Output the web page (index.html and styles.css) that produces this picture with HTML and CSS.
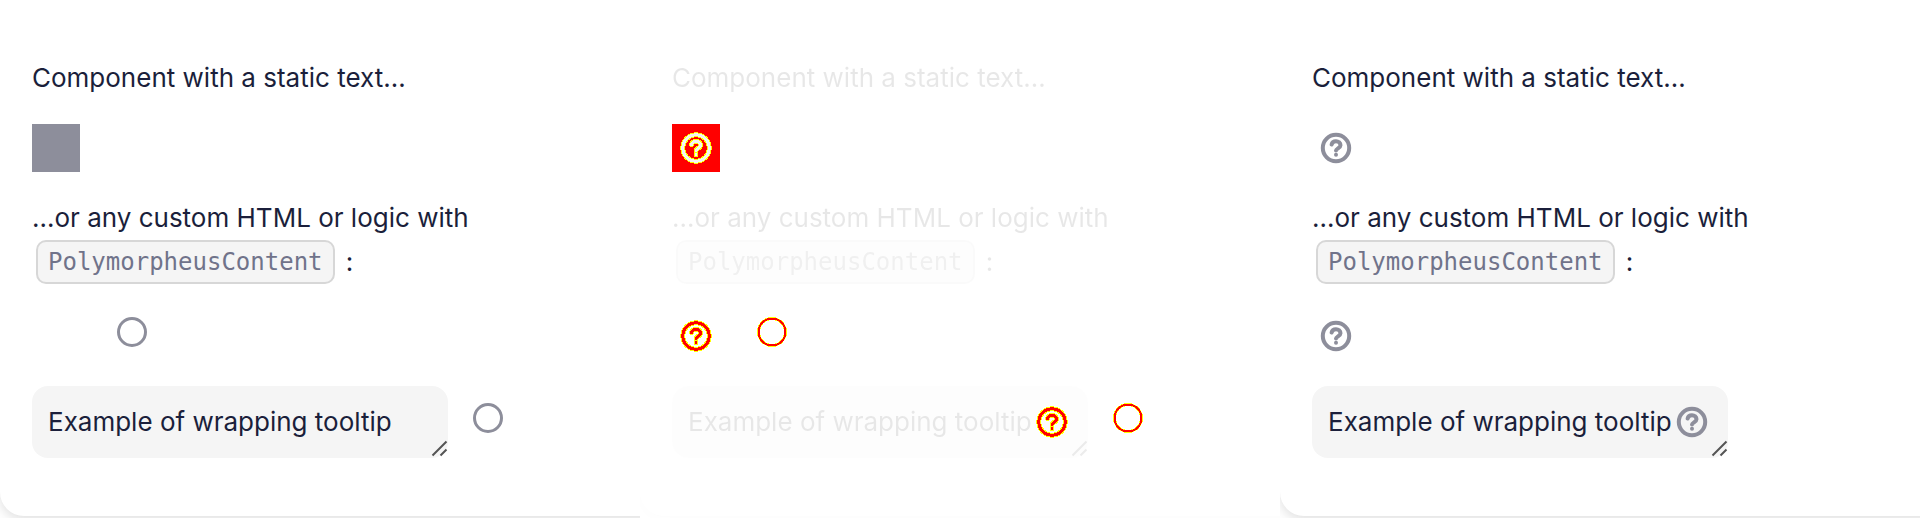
FILE: index.html
```
<!DOCTYPE html>
<html lang="en">
<head>
<meta charset="utf-8">
<title>Tooltip</title>
<link rel="stylesheet" href="styles.css">
</head>
<body>
<svg class="defs" aria-hidden="true">
  <symbol id="help" viewBox="0 0 48 48">
    <circle cx="24" cy="24" r="13.2"/>
    <path d="M19.6 20.6C20 18.5 21.8 17.3 24 17.3C26.5 17.3 28.5 18.9 28.5 21.2C28.5 24 24 24.5 24 26.6"/>
    <path d="M24 30.7v.1"/>
  </symbol>
  <symbol id="ring" viewBox="0 0 30 30"><circle cx="15" cy="15" r="13.5"/></symbol>
  <symbol id="grip" viewBox="0 0 20 20"><path d="M4.5 17.5l14-14M12.5 17.5l6-6"/></symbol>
</svg>
<main class="board">
  <section class="panel">
    <div class="card">
      <p class="text">Component with a static text…</p>
      <div class="row"><span class="block"></span></div>
      <p class="text long">…or any custom HTML or logic with <code class="code">PolymorpheusContent</code> :</p>
      <div class="row"><span class="slot"></span><svg class="ring ring-near"><use href="#ring"/></svg></div>
      <div class="row">
        <div class="field"><textarea class="area" rows="1" aria-label="Example">Example of wrapping tooltip</textarea><svg class="grip"><use href="#grip"/></svg></div>
        <svg class="ring ring-far"><use href="#ring"/></svg>
      </div>
    </div>
  </section>
  <section class="panel diff">
    <div class="card">
      <p class="text faint">Component with a static text…</p>
      <div class="row"><button class="help filled" aria-label="Help"><svg class="icon outline"><use href="#help"/></svg><svg class="icon core"><use href="#help"/></svg></button></div>
      <p class="text long faint">…or any custom HTML or logic with <code class="code">PolymorpheusContent</code> :</p>
      <div class="row"><button class="help" aria-label="Help"><svg class="icon outline"><use href="#help"/></svg><svg class="icon core"><use href="#help"/></svg></button><span class="ring-pair ring-near"><svg class="ring outline"><use href="#ring"/></svg><svg class="ring core"><use href="#ring"/></svg></span></div>
      <div class="row">
        <div class="field"><textarea class="area faint" rows="1" aria-label="Example">Example of wrapping tooltip</textarea><svg class="grip faint"><use href="#grip"/></svg><button class="help inside" aria-label="Help"><svg class="icon outline"><use href="#help"/></svg><svg class="icon core"><use href="#help"/></svg></button></div>
        <span class="ring-pair ring-far"><svg class="ring outline"><use href="#ring"/></svg><svg class="ring core"><use href="#ring"/></svg></span>
      </div>
    </div>
  </section>
  <section class="panel">
    <div class="card">
      <p class="text">Component with a static text…</p>
      <div class="row"><button class="help" aria-label="Help"><svg class="icon"><use href="#help"/></svg></button></div>
      <p class="text long">…or any custom HTML or logic with <code class="code">PolymorpheusContent</code> :</p>
      <div class="row"><button class="help" aria-label="Help"><svg class="icon"><use href="#help"/></svg></button></div>
      <div class="row">
        <div class="field"><textarea class="area" rows="1" aria-label="Example">Example of wrapping tooltip</textarea><svg class="grip"><use href="#grip"/></svg><button class="help inside" aria-label="Help"><svg class="icon"><use href="#help"/></svg></button></div>
      </div>
    </div>
  </section>
</main>
</body>
</html>
```
FILE: styles.css
```
* { box-sizing: border-box; }
body { margin: 0; background: #fff; color: #1b1f3b; font-family: Inter, "Liberation Sans", sans-serif; }
.defs { position: absolute; width: 0; height: 0; }
.board { display: grid; grid-template-columns: repeat(3, 1fr); }
.panel { overflow: hidden; padding-bottom: 2px; }
.card {
  display: flex; flex-direction: column; gap: 24px;
  margin-right: -32px; padding: 56px 32px 58px;
  background: #fff; border-radius: 0 0 0 24px;
  box-shadow: 0 4px 12px rgba(0, 0, 0, .12);
}
.text { margin: 0; max-width: 448px; font-size: 26px; line-height: 44px; }
.long { margin-bottom: 4px; }
.code {
  display: inline-block; margin: 0 4px; padding: 0 10px;
  border: 2px solid #d7d7d7; border-radius: 10px;
  background: #f5f5f5; color: #70738a;
  font-family: "DejaVu Sans Mono", monospace; font-size: 24px; line-height: 40px;
  vertical-align: bottom;
}
.row { display: flex; align-items: flex-start; }
.row + .row { margin-top: 2px; }
.block { width: 48px; height: 48px; background: #8d8e9b; }
.slot { width: 48px; height: 48px; }
.help {
  position: relative; flex: none; width: 48px; height: 48px; padding: 0;
  border: 0; background: none; color: #8d8e9b;
}
.icon, .ring, .grip { display: block; fill: none; stroke: currentColor; }
.icon { width: 48px; height: 48px; stroke-width: 4px; stroke-linecap: round; }
.ring { width: 30px; height: 30px; stroke-width: 3px; color: #8d8e9b; }
.ring-near { margin: 5px 0 0 37px; }
.ring-far { margin: 17px 0 0 25px; }
.field { position: relative; width: 416px; height: 72px; }
.area {
  display: block; width: 100%; height: 100%; padding: 16px; border: 0; border-radius: 16px;
  resize: none; overflow: hidden; background: #f5f5f5; color: inherit;
  font: inherit; font-size: 26px; line-height: 40px;
}
.grip { position: absolute; right: 0; bottom: 0; width: 20px; height: 20px; color: #555; stroke-width: 2px; }
.inside { position: absolute; right: 12px; top: 12px; }
.faint { opacity: .1; filter: grayscale(1); }
.diff .card { box-shadow: 0 4px 12px rgba(0, 0, 0, .012); }
.diff .core { position: absolute; inset: 0; color: #f00; stroke-width: 3px; }
.diff .outline { color: #ff0; stroke-width: 5px; }
.diff .icon, .diff .ring { shape-rendering: crispEdges; }
.diff .filled { background: #f00; }
.diff .filled .core { color: #f5f5f5; }
.ring-pair { position: relative; width: 30px; height: 30px; }
.diff .ring.core { stroke-width: 2px; }
.diff .ring.outline { stroke-width: 3px; }
```
